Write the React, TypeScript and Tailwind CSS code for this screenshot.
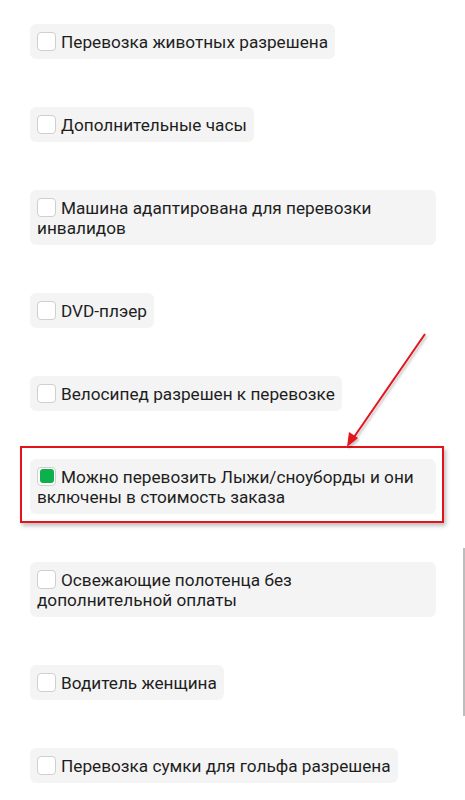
import React from "react";

type Opcao = { id: number; texto: string; marcado?: boolean; destaque?: boolean; largo?: boolean };

const opcoes: Opcao[] = [
  { id: 1, texto: "Перевозка животных разрешена" },
  { id: 2, texto: "Дополнительные часы" },
  { id: 3, texto: "Машина адаптирована для перевозки инвалидов" },
  { id: 4, texto: "DVD-плэер" },
  { id: 5, texto: "Велосипед разрешен к перевозке" },
  { id: 6, texto: "Можно перевозить Лыжи/сноуборды и они включены в стоимость заказа", marcado: true, destaque: true },
  { id: 7, texto: "Освежающие полотенца без\nдополнительной оплаты", largo: true },
  { id: 8, texto: "Водитель женщина" },
  { id: 9, texto: "Перевозка сумки для гольфа разрешена" },
];

function Caixa({ marcado }: { marcado?: boolean }) {
  return (
    <span className="mr-[5px] inline-flex h-[19px] w-[19px] items-center justify-center rounded-[4px] border border-[#cfcfcf] bg-white align-top">
      {marcado && <span className="h-[14px] w-[14px] rounded-[3px] bg-[#0cb14b]" />}
    </span>
  );
}

function Item({ o }: { o: Opcao }) {
  const corpo = (
    <label
      className={
        (o.largo ? "w-[406px] " : "w-fit ") +
        "block max-w-[406px] whitespace-pre-line rounded-md bg-[#f4f4f4] px-[7px] py-[7.5px] text-[17.2px] leading-[20px] text-[#1e1e1e]"
      }
    >
      <Caixa marcado={o.marcado} />
      {o.texto}
    </label>
  );
  if (!o.destaque) return corpo;
  // moldura vermelha da captura, por cima do item
  return (
    <div className="relative w-[406px]">
      {corpo}
      <div className="pointer-events-none absolute -top-[13px] -left-[10px] -right-[8px] -bottom-[9px] border-2 border-[#e3131b] shadow-[2px_3px_4px_rgba(0,0,0,0.25)]" />
    </div>
  );
}

export default function App() {
  return (
    <div
      className="relative h-[800px] w-[465px] overflow-hidden bg-white"
      style={{ fontFamily: "Roboto, 'Liberation Sans', sans-serif" }}
    >
      <div className="flex flex-col items-start gap-[48px] pl-[30px] pt-[24px]">
        {opcoes.map((o) => (
          <Item key={o.id} o={o} />
        ))}
      </div>

      {/* seta */}
      <svg className="pointer-events-none absolute left-0 top-0" width="465" height="800">
        <defs>
          <filter id="sombra" x="-20%" y="-20%" width="140%" height="140%">
            <feDropShadow dx="1.5" dy="2" stdDeviation="1.2" floodOpacity="0.25" />
          </filter>
        </defs>
        <g filter="url(#sombra)">
          <line x1="425" y1="334" x2="352" y2="440" stroke="#e3131b" strokeWidth="2" />
          <polygon points="347,447 349,432 358,438" fill="#e3131b" />
        </g>
      </svg>

      {/* barra de rolagem */}
      <div className="absolute right-0 top-[548px] h-[168px] w-[2px] bg-[#bdbdbd]" />
    </div>
  );
}
